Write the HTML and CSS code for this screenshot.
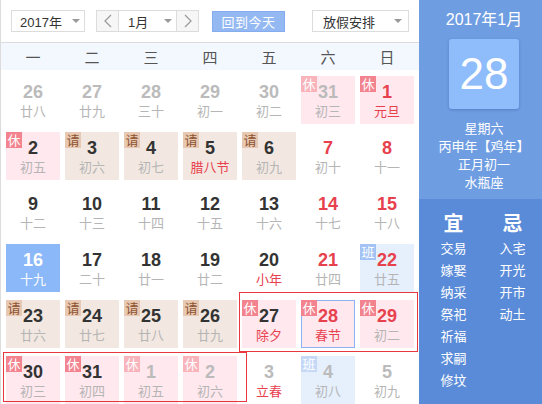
FILE: index.html
```html
<!DOCTYPE html>
<html lang="zh">
<head>
<meta charset="utf-8">
<title>万年历</title>
<link rel="stylesheet" href="styles.css">
</head>
<body>
<div class="app">
  <div class="main">
    <div class="toolbar">
      <div class="select year"><span>2017年</span><i class="caret"></i></div>
      <div class="month-group">
        <div class="nav"><svg width="8" height="14" viewBox="0 0 8 14"><polyline points="7,1 1,7 7,13" fill="none" stroke="#999" stroke-width="1.2"/></svg></div>
        <div class="select month"><span>1月</span><i class="caret"></i></div>
        <div class="nav"><svg width="8" height="14" viewBox="0 0 8 14"><polyline points="1,1 7,7 1,13" fill="none" stroke="#999" stroke-width="1.2"/></svg></div>
      </div>
      <div class="today-btn">回到今天</div>
      <div class="select holiday"><span>放假安排</span><i class="caret"></i></div>
    </div>
    <div class="weekdays">
      <div>一</div><div>二</div><div>三</div><div>四</div><div>五</div><div>六</div><div>日</div>
    </div>
    <div class="grid">
      <div class="cell other"><b>26</b><s>廿八</s></div>
      <div class="cell other"><b>27</b><s>廿九</s></div>
      <div class="cell other"><b>28</b><s>三十</s></div>
      <div class="cell other"><b>29</b><s>初一</s></div>
      <div class="cell other"><b>30</b><s>初二</s></div>
      <div class="cell other rest"><em class="tag">休</em><b>31</b><s>初三</s></div>
      <div class="cell rest"><em class="tag">休</em><b class="red">1</b><s class="fest">元旦</s></div>

      <div class="cell rest"><em class="tag">休</em><b>2</b><s>初五</s></div>
      <div class="cell leave"><em class="tag">请</em><b>3</b><s>初六</s></div>
      <div class="cell leave"><em class="tag">请</em><b>4</b><s>初七</s></div>
      <div class="cell leave"><em class="tag">请</em><b>5</b><s class="fest">腊八节</s></div>
      <div class="cell leave"><em class="tag">请</em><b>6</b><s>初九</s></div>
      <div class="cell"><b class="red">7</b><s>初十</s></div>
      <div class="cell"><b class="red">8</b><s>十一</s></div>

      <div class="cell"><b>9</b><s>十二</s></div>
      <div class="cell"><b>10</b><s>十三</s></div>
      <div class="cell"><b>11</b><s>十四</s></div>
      <div class="cell"><b>12</b><s>十五</s></div>
      <div class="cell"><b>13</b><s>十六</s></div>
      <div class="cell"><b class="red">14</b><s>十七</s></div>
      <div class="cell"><b class="red">15</b><s>十八</s></div>

      <div class="cell now"><b>16</b><s>十九</s></div>
      <div class="cell"><b>17</b><s>二十</s></div>
      <div class="cell"><b>18</b><s>廿一</s></div>
      <div class="cell"><b>19</b><s>廿二</s></div>
      <div class="cell"><b>20</b><s class="fest">小年</s></div>
      <div class="cell"><b class="red">21</b><s>廿四</s></div>
      <div class="cell work"><em class="tag">班</em><b class="red">22</b><s>廿五</s></div>

      <div class="cell leave"><em class="tag">请</em><b>23</b><s>廿六</s></div>
      <div class="cell leave"><em class="tag">请</em><b>24</b><s>廿七</s></div>
      <div class="cell leave"><em class="tag">请</em><b>25</b><s>廿八</s></div>
      <div class="cell leave"><em class="tag">请</em><b>26</b><s>廿九</s></div>
      <div class="cell rest"><em class="tag">休</em><b>27</b><s class="fest">除夕</s></div>
      <div class="cell rest selected"><em class="tag">休</em><b class="red">28</b><s class="fest">春节</s></div>
      <div class="cell rest"><em class="tag">休</em><b class="red">29</b><s>初二</s></div>

      <div class="cell rest"><em class="tag">休</em><b>30</b><s>初三</s></div>
      <div class="cell rest"><em class="tag">休</em><b>31</b><s>初四</s></div>
      <div class="cell other rest"><em class="tag">休</em><b>1</b><s>初五</s></div>
      <div class="cell other rest"><em class="tag">休</em><b>2</b><s>初六</s></div>
      <div class="cell other"><b>3</b><s class="fest">立春</s></div>
      <div class="cell other work"><em class="tag">班</em><b>4</b><s>初八</s></div>
      <div class="cell other"><b>5</b><s>初九</s></div>

      <div class="outline outline-a"></div>
      <div class="outline outline-b"></div>
    </div>
  </div>
  <div class="side">
    <div class="side-top">
      <div class="ym">2017年1月</div>
      <div class="daybox">28</div>
      <div class="info">
        <div>星期六</div>
        <div>丙申年【鸡年】</div>
        <div>正月初一</div>
        <div>水瓶座</div>
      </div>
    </div>
    <div class="side-bottom">
      <div class="col">
        <div class="head">宜</div>
        <div>交易</div><div>嫁娶</div><div>纳采</div><div>祭祀</div><div>祈福</div><div>求嗣</div><div>修坟</div>
      </div>
      <div class="col">
        <div class="head">忌</div>
        <div>入宅</div><div>开光</div><div>开市</div><div>动土</div>
      </div>
    </div>
  </div>
</div>
</body>
</html>
```
FILE: styles.css
```css
* { box-sizing: border-box; margin: 0; padding: 0; }
html, body { width: 542px; height: 404px; overflow: hidden; background: #fff; }
body {
  font-family: "Liberation Sans", "Noto Sans CJK SC", sans-serif;
  font-size: 13px;
  color: #333;
}
.app { display: flex; width: 542px; height: 404px; }
.main { width: 419px; border-left: 1px solid #dcdcdc; flex: none; }

.toolbar {
  height: 43px;
  border-bottom: 1px solid #dcdcdc;
  display: flex;
  align-items: flex-start;
  padding: 10px 0 0 10px;
}
.select {
  height: 22px;
  border: 1px solid #dcdcdc;
  background: #fff;
  display: flex;
  align-items: center;
  justify-content: space-between;
  padding: 0 4px 0 8px;
  font-size: 13px;
  color: #333;
}
.caret {
  width: 0; height: 0;
  border-left: 4px solid transparent;
  border-right: 4px solid transparent;
  border-top: 4px solid #999;
}
.year { width: 74px; }
.month-group {
  margin-left: 11px;
  display: flex;
  height: 22px;
  border: 1px solid #dcdcdc;
}
.month-group .select { border: none; border-left: 1px solid #dcdcdc; border-right: 1px solid #dcdcdc; height: 20px; width: 59px; padding-left: 9px; }
.nav {
  width: 21px;
  height: 20px;
  background: #f6f6f6;
  display: flex;
  align-items: center;
  justify-content: center;
}
.today-btn {
  margin-left: 13px;
  margin-top: 1px;
  width: 73px;
  height: 21px;
  background: #94b9f2;
  border: 1px solid #84acee;
  color: #fff;
  font-size: 13px;
  display: flex;
  align-items: center;
  justify-content: center;
  letter-spacing: 0.5px;
}
.holiday { margin-left: 27px; width: 97px; padding-left: 10px; padding-right: 6px; }

.weekdays {
  height: 27px;
  background: #f3f7fe;
  display: grid;
  grid-template-columns: repeat(7, 54px);
  column-gap: 5px;
  padding-left: 5px;
}
.weekdays div {
  text-align: center;
  line-height: 27px;
  font-size: 15px;
  color: #555;
  font-family: "Noto Sans CJK SC", sans-serif;
}

.grid {
  position: relative;
  display: grid;
  grid-template-columns: repeat(7, 54px);
  grid-auto-rows: 48px;
  column-gap: 5px;
  row-gap: 8px;
  padding: 6px 0 0 5px;
}
.cell {
  position: relative;
  text-align: center;
  padding-top: 5px;
}
.cell b {
  display: block;
  font-family: "Liberation Sans", sans-serif;
  font-weight: bold;
  font-size: 18px;
  line-height: 22px;
  color: #333;
}
.cell s {
  display: block;
  text-decoration: none;
  font-size: 13px;
  line-height: 16px;
  color: #b5b5b5;
  font-family: "Noto Sans CJK SC", sans-serif;
}
.cell b.red { color: #e8414e; }
.cell s.fest { color: #e8414e; }
.cell.other b { color: #bbb; }

.tag {
  position: absolute;
  left: 0; top: 0;
  width: 16px; height: 16px;
  font-style: normal;
  font-size: 13px;
  line-height: 16px;
  text-align: center;
  font-family: "Noto Sans CJK SC", sans-serif;
}
.rest { background: #ffe8ee; }
.rest .tag { background: #f2838f; color: #fff; }
.other.rest .tag { background: #f8b3bb; }
.leave { background: #f2e8e1; }
.leave .tag { background: #e7c8b3; color: #8e5330; }
.work { background: #e6f0fd; }
.work .tag { background: #a3c3f4; color: #fff; }
.other.work .tag { background: #c5d9f7; }

.now { background: #8bb8f8; }
.now b, .now s { color: #fff; }
.selected { border: 1px solid #8ab3f1; padding-top: 4px; }
.selected .tag { left: -1px; top: -1px; }

.outline {
  position: absolute;
  border: 1px solid #e8383d;
  pointer-events: none;
}
.outline-a { left: 238px; top: 222px; width: 179px; height: 60px; }
.outline-b { left: 2px; top: 282px; width: 244px; height: 50px; }

.side { width: 123px; flex: none; color: #fff; font-family: "Noto Sans CJK SC", sans-serif; }
.side-top {
  height: 199px;
  background: #6f9de2;
  padding-left: 7px;
  display: flex;
  flex-direction: column;
  align-items: center;
}
.ym {
  margin-top: 10px;
  font-size: 16px;
  line-height: 20px;
  font-family: "Liberation Sans", "Noto Sans CJK SC", sans-serif;
}
.daybox {
  margin-top: 9px;
  width: 70px;
  height: 70px;
  background: #8fbcfb;
  border-radius: 3px;
  box-shadow: 0 1px 3px rgba(40, 70, 140, 0.35);
  font-family: "Liberation Sans", sans-serif;
  font-size: 44px;
  line-height: 70px;
  text-align: center;
}
.info { margin-top: 10px; text-align: center; font-size: 13px; line-height: 18px; }
.side-bottom {
  height: 205px;
  background: #5a8bd8;
  display: flex;
  padding: 12px 0 0 5px;
}
.side-bottom .col { width: 60px; text-align: center; font-size: 13px; line-height: 22px; }
.side-bottom .head { font-size: 20px; font-weight: bold; line-height: 24px; margin-bottom: 2px; }
```
